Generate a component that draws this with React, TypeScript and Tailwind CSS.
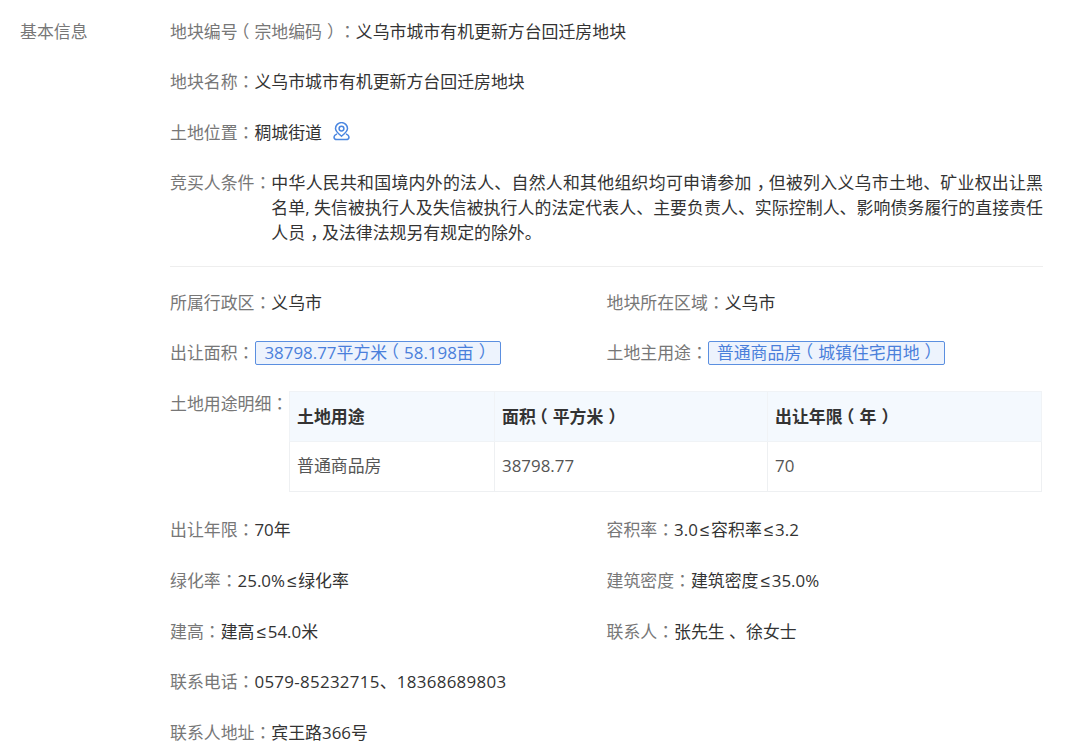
import React from "react";

type Field = {
  label: string;
  value: string;
};

const twoColTop: Field[] = [
  { label: "所属行政区：", value: "义乌市" },
  { label: "地块所在区域：", value: "义乌市" },
];

const twoColBottom: Field[] = [
  { label: "出让年限：", value: "70年" },
  { label: "容积率：", value: "3.0≤容积率≤3.2" },
  { label: "绿化率：", value: "25.0%≤绿化率" },
  { label: "建筑密度：", value: "建筑密度≤35.0%" },
  { label: "建高：", value: "建高≤54.0米" },
  { label: "联系人：", value: "张先生 、徐女士" },
];

// the reference font centres fullwidth punctuation in its cell, the SC cut doesn't
function Punct({ text }: { text: string }) {
  return (
    <>
      {text.split(/([（），：≤])/).map((part, i) => {
        if (part === "≤") return <span key={i} className="mx-[2px] font-['Liberation_Sans'] leading-none">{part}</span>;
        if (part === "（") return <span key={i} className="inline-block -translate-x-[0.3em] leading-none">{part}</span>;
        if (part === "）") return <span key={i} className="inline-block translate-x-[0.3em] leading-none">{part}</span>;
        if (part === "，") return <span key={i} className="inline-block translate-x-[0.3em] leading-none">{part}</span>;
        if (part === "：") return <span key={i} className="font-['Noto_Sans_CJK_TC'] leading-none">{part}</span>;
        return part;
      })}
    </>
  );
}

function Row({ label, value, valueClassName, children }: { label: string; value?: string; valueClassName?: string; children?: React.ReactNode }) {
  return (
    <div className="flex h-[25px] items-center whitespace-nowrap">
      <span className="text-[#777]"><Punct text={label} /></span>
      {value && <span className={`text-[#333] ${valueClassName ?? ""}`}><Punct text={value} /></span>}
      {children}
    </div>
  );
}

function Tag({ children, className }: { children: string; className?: string }) {
  return (
    <span className={`flex h-[24px] items-center rounded-[2px] border border-[#5b8fe0] bg-[#edf3fd] pl-2 text-[#4a7fdb] ${className ?? "pr-2"}`}>
      <Punct text={children} />
    </span>
  );
}

function PinIcon() {
  return (
    <svg width="17" height="20" viewBox="0 0 17 20" fill="none" stroke="#4a86e0" strokeWidth="1.5" className="ml-[11px] -mt-[2px]">
      <path d="M8.5 14.2C5.5 11.8 2.5 9.6 2.5 6.6a6 6 0 0 1 12 0c0 3-3 5.2-6 7.6Z" />
      <circle cx="8.5" cy="6.6" r="2.4" />
      <path d="M4 11.8c-1.8.9-3 1.9-3 3.2 0 1.1 1 2.6 3 2.6h9c2 0 3-1.5 3-2.6 0-1.3-1.2-2.3-3-3.2" />
    </svg>
  );
}

export default function App() {
  return (
    <div
      className="flex h-[756px] w-[1080px] overflow-hidden bg-white pl-5 pt-[19px] text-[16.9px] [text-spacing-trim:space-all]"
      style={{ fontFamily: '"Open Sans", "Noto Sans CJK SC", sans-serif' }}
    >
      <div className="h-[25px] w-[150px] shrink-0 leading-[25px] text-[#777]">基本信息</div>

      <div className="w-[873px]">
        <div className="flex flex-col gap-[25.6px]">
          <Row label="地块编号（宗地编码）：" value="义乌市城市有机更新方台回迁房地块" />
          <Row label="地块名称：" value="义乌市城市有机更新方台回迁房地块" />
          <Row label="土地位置：" value="稠城街道">
            <PinIcon />
          </Row>
          <div className="-mt-px flex leading-[25px]">
            <span className="shrink-0 text-[#777]"><Punct text="竞买人条件：" /></span>
            <span className="text-justify text-[#333]">
              <Punct text="中华人民共和国境内外的法人、自然人和其他组织均可申请参加，但被列入义乌市土地、矿业权出让黑名单, 失信被执行人及失信被执行人的法定代表人、主要负责人、实际控制人、影响债务履行的直接责任人员，及法律法规另有规定的除外。" />
            </span>
          </div>
        </div>

        <div className="mb-[23px] mt-[21px] border-t border-[#eee]" />

        <div className="grid grid-cols-2 gap-y-[25.6px]">
          {twoColTop.map((f) => (
            <Row key={f.label} label={f.label} value={f.value} />
          ))}
          <Row label="出让面积：">
            <Tag className="ml-px pr-[9px]">38798.77平方米（58.198亩）</Tag>
          </Row>
          <Row label="土地主用途：">
            <Tag>普通商品房（城镇住宅用地）</Tag>
          </Row>
        </div>

        <div className="mt-[26px] flex">
          <span className="w-[119px] shrink-0 leading-[25px] text-[#777]"><Punct text="土地用途明细：" /></span>
          <table className="w-[753px] table-fixed border-collapse">
            <colgroup>
              <col className="w-[205px]" />
              <col className="w-[273px]" />
              <col />
            </colgroup>
            <thead>
              <tr className="h-[50px] bg-[#f4f9fe] text-left font-bold text-[#333]">
                <th className="border border-[#f0f3f6] px-[7px]"><Punct text="土地用途" /></th>
                <th className="border border-[#f0f3f6] px-[7px]"><Punct text="面积（平方米）" /></th>
                <th className="border border-[#f0f3f6] px-[7px]"><Punct text="出让年限（年）" /></th>
              </tr>
            </thead>
            <tbody>
              <tr className="h-[50px] text-[#555]">
                <td className="border border-[#eef0f2] px-[7px] pb-[2px]">普通商品房</td>
                <td className="border border-[#eef0f2] px-[7px] pb-[2px]">38798.77</td>
                <td className="border border-[#eef0f2] px-[7px] pb-[2px]">70</td>
              </tr>
            </tbody>
          </table>
        </div>

        <div className="mt-[25px] grid grid-cols-2 gap-y-[25.7px]">
          {twoColBottom.map((f) => (
            <Row key={f.label} label={f.label} value={f.value} />
          ))}
        </div>

        <div className="mt-[25.7px] flex flex-col gap-[25.7px]">
          <Row label="联系电话：" value="0579-85232715、18368689803" valueClassName="tracking-[0.3px]" />
          <Row label="联系人地址：" value="宾王路366号" />
        </div>
      </div>
    </div>
  );
}
